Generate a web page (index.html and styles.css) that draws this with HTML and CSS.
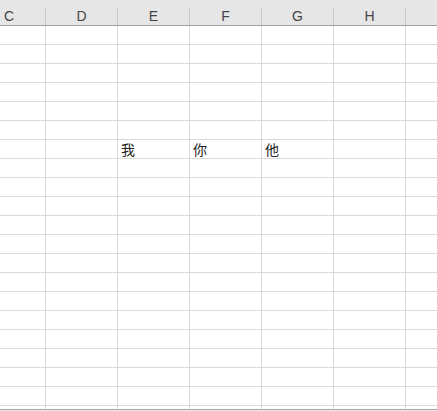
FILE: index.html
```html
<!DOCTYPE html>
<html>
<head>
<meta charset="utf-8">
<link rel="stylesheet" href="styles.css">
</head>
<body>
<div class="sheet">
  <div class="head">
    <div class="hc c0">C</div>
    <div class="hc">D</div>
    <div class="hc">E</div>
    <div class="hc">F</div>
    <div class="hc">G</div>
    <div class="hc">H</div>
    <div class="hc last"></div>
  </div>
  <div class="body" id="body"></div>
  <div class="foot"></div>
</div>
<script>
  var body = document.getElementById('body');
  var data = {6: {2: '我', 3: '你', 4: '他'}};
  for (var r = 0; r < 21; r++) {
    var row = document.createElement('div');
    row.className = 'row' + (r === 20 ? ' stub' : '');
    for (var c = 0; c < 7; c++) {
      var cell = document.createElement('div');
      cell.className = 'cell' + (c === 0 ? ' c0' : '') + (c === 6 ? ' last' : '');
      if (data[r] && data[r][c]) cell.textContent = data[r][c];
      row.appendChild(cell);
    }
    body.appendChild(row);
  }
</script>
</body>
</html>
```
FILE: styles.css
```css
* { box-sizing: border-box; }
html, body { margin: 0; padding: 0; background: #fff; }
body { width: 437px; height: 411px; overflow: hidden; }
.sheet { display: flex; flex-direction: column; width: 437px; }
.head {
  display: flex;
  height: 26px;
  padding-top: 8px;
  background: #e6e6e6;
  border-bottom: 1px solid #9f9f9f;
}
.hc {
  flex: 0 0 72px;
  border-right: 1px solid #c8c8c8;
  display: flex;
  align-items: center;
  justify-content: center;
  font-family: "Liberation Sans", Arial, sans-serif;
  font-size: 14px;
  color: #444;
  padding-bottom: 1px;
}
.c0 { flex-basis: 46px; justify-content: flex-start; padding-left: 4px; }
.last { flex: 1 1 auto; border-right: none; }
.body { display: flex; flex-direction: column; }
.row { display: flex; height: 19px; border-bottom: 1px solid #dadada; }
.row.stub { height: 3px; border-bottom: none; }
.cell {
  flex: 0 0 72px;
  border-right: 1px solid #dadada;
  font-family: "Noto Sans CJK SC", sans-serif;
  font-size: 14px;
  line-height: 18px;
  color: #222;
  padding-left: 3px;
  white-space: nowrap;
}
.cell.c0 { flex-basis: 46px; padding-left: 0; }
.cell.last { flex: 1 1 auto; border-right: none; }
.foot { height: 2px; border-top: 1px solid #a8a8a8; background: #e8e8e8; }
```
